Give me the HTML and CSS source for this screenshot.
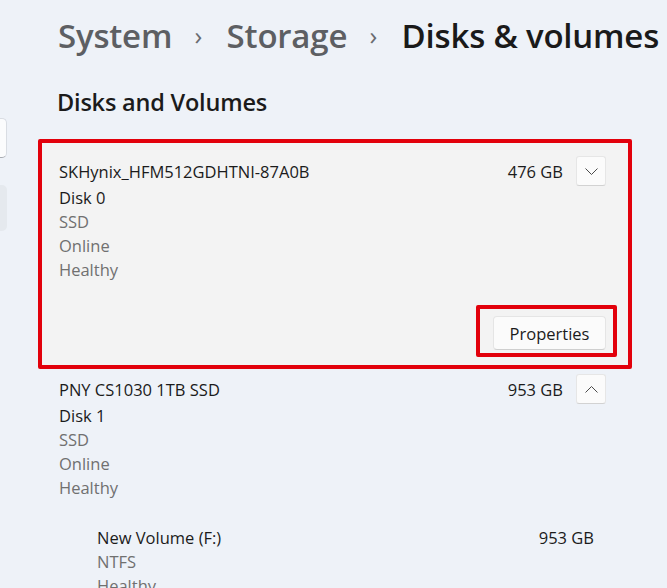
FILE: index.html
```html
<!DOCTYPE html>
<html>
<head>
<meta charset="utf-8">
<link rel="stylesheet" href="styles.css">
</head>
<body>
<div class="app">
  <div class="sidebar">
    <div class="search"></div>
    <div class="nav-selected"></div>
  </div>
  <div class="main">
    <div class="breadcrumb">
      <span class="crumb">System</span>
      <span class="sep">›</span>
      <span class="crumb">Storage</span>
      <span class="sep">›</span>
      <span class="crumb current">Disks &amp; volumes</span>
    </div>
    <div class="section-title">Disks and Volumes</div>

    <div class="highlight">
      <div class="card">
        <div class="row">
          <span class="name">SKHynix_HFM512GDHTNI-87A0B</span>
          <span class="size">476 GB</span>
          <span class="toggle">
            <svg width="13" height="7" viewBox="0 0 13 7"><path d="M0.5 0.5 L6.5 6.5 L12.5 0.5" fill="none" stroke="#4a4a4a" stroke-width="1"/></svg>
          </span>
        </div>
        <div class="line primary">Disk 0</div>
        <div class="line">SSD</div>
        <div class="line">Online</div>
        <div class="line">Healthy</div>
        <div class="footer">
          <div class="highlight-btn">
            <button class="btn">Properties</button>
          </div>
        </div>
      </div>
    </div>

    <div class="disk">
      <div class="row">
        <span class="name">PNY CS1030 1TB SSD</span>
        <span class="size">953 GB</span>
        <span class="toggle">
          <svg width="13" height="7" viewBox="0 0 13 7"><path d="M0.5 6.5 L6.5 0.5 L12.5 6.5" fill="none" stroke="#4a4a4a" stroke-width="1"/></svg>
        </span>
      </div>
      <div class="line primary">Disk 1</div>
      <div class="line">SSD</div>
      <div class="line">Online</div>
      <div class="line">Healthy</div>
      <div class="volume">
        <div class="vrow">
          <span class="name">New Volume (F:)</span>
          <span class="vsize">953 GB</span>
        </div>
        <div class="line">NTFS</div>
        <div class="line">Healthy</div>
      </div>
    </div>
  </div>
</div>
</body>
</html>
```

FILE: styles.css
```css
html, body {
  margin: 0;
  padding: 0;
  background: #eef2f8;
  font-family: "Open Sans", "Noto Sans", sans-serif;
  color: #1b1b1b;
  overflow: hidden;
}
.app {
  display: flex;
  height: 588px;
}
.sidebar {
  width: 8px;
  overflow: hidden;
  flex: none;
  padding-top: 118px;
}
.search {
  width: 200px;
  height: 40px;
  margin-left: -193px;
  background: #fbfcfd;
  border: 1px solid #d9dde3;
  border-bottom-color: #a8acb2;
  border-radius: 5px;
  box-sizing: border-box;
}
.nav-selected {
  width: 200px;
  height: 46px;
  margin-left: -193px;
  margin-top: 27px;
  background: #e5e9ee;
  border-radius: 5px;
}
.main {
  flex: 1;
  padding-left: 30px;
}
.breadcrumb {
  padding-left: 20px;
  padding-top: 10px;
  height: 52px;
  font-size: 33px;
  font-weight: 600;
  line-height: 52px;
  white-space: nowrap;
  letter-spacing: -0.2px;
}
.crumb { color: #5d5f63; }
.crumb.current { color: #1a1a1a; }
.sep {
  color: #6a6c70;
  font-weight: 400;
  font-size: 26px;
  margin: 0 16px 0 14px;
  position: relative;
  top: -3px;
}
.section-title {
  padding-left: 19px;
  margin-top: 24px;
  font-size: 23.5px;
  font-weight: 600;
  line-height: 32px;
  letter-spacing: -0.2px;
}
.highlight {
  margin-top: 21px;
  width: 594px;
  box-sizing: border-box;
  border: 4px solid #e2000b;
  border-radius: 2px;
}
.card {
  background: #f3f3f3;
  padding: 13px 0 8px 17px;
}
.row {
  display: flex;
  align-items: center;
  height: 30px;
  padding-right: 22px;
  font-size: 16.5px;
}
.name { flex: 1; color: #1b1b1b; }
.size { color: #1b1b1b; margin-right: 13px; }
.toggle {
  width: 30px;
  height: 30px;
  box-sizing: border-box;
  background: #fbfbfb;
  border: 1px solid #e6e6e6;
  border-bottom-color: #d2d2d2;
  border-radius: 3px;
  display: flex;
  align-items: center;
  justify-content: center;
}
.line {
  font-size: 16.5px;
  line-height: 24px;
  color: #707070;
}
.line.primary { color: #1b1b1b; }
.footer {
  display: flex;
  justify-content: flex-end;
  padding-right: 11px;
  margin-top: 23px;
}
.highlight-btn {
  border: 4px solid #e2000b;
  border-radius: 2px;
  padding: 7px 7px 3px 13px;
}
.btn {
  display: block;
  width: 113px;
  height: 34px;
  font-family: inherit;
  font-size: 16.5px;
  color: #1b1b1b;
  background: #fbfbfb;
  border: 1px solid #e5e5e5;
  border-bottom-color: #cfcfcf;
  border-radius: 4px;
}
.disk {
  margin: 5px 0 0 4px;
  width: 586px;
  padding-left: 17px;
  box-sizing: border-box;
}
.volume {
  margin-top: 26px;
  padding-left: 38px;
}
.vrow {
  display: flex;
  font-size: 16.5px;
  line-height: 24px;
  padding-right: 34px;
}
.vsize { color: #1b1b1b; }
```
